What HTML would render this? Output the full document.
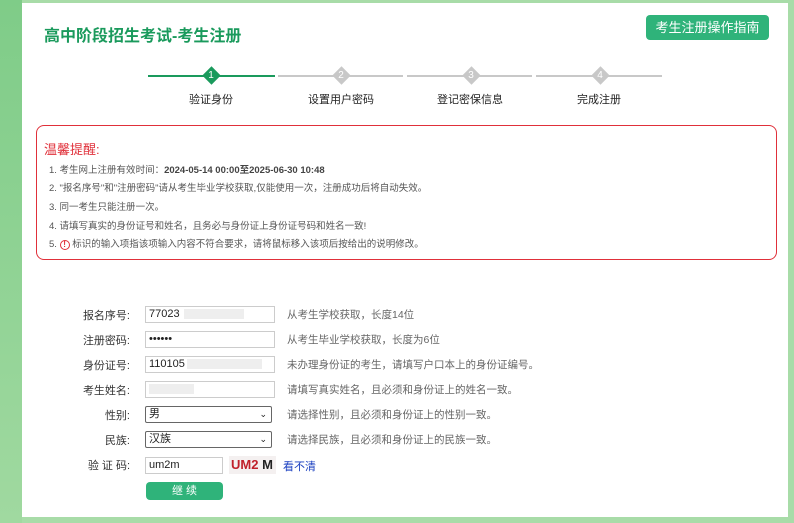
<!DOCTYPE html>
<html><head><meta charset="utf-8"><style>
*{margin:0;padding:0;box-sizing:border-box}
body{width:794px;height:523px;background:#a8dca8;position:relative;overflow:hidden;font-family:"Liberation Sans","Noto Sans CJK SC",sans-serif;color:#333}
.lbg{position:absolute;left:0;top:0;width:22px;height:523px;background:linear-gradient(#7fcc88,#a0d9a0)}
.panel{position:absolute;left:22px;top:3px;width:766px;height:514px;background:#fff}
.abs{position:absolute}
h1{position:absolute;left:44px;top:22px;font-size:16px;color:#1a9a5c;font-weight:bold}
.guide{position:absolute;left:646px;top:15px;width:123px;height:25px;background:#2fb37a;border-radius:4px;color:#fff;font-size:13px;line-height:25px;text-align:center}
.ln{position:absolute;top:75px;height:2px;background:#c8c8c8}
.dm{position:absolute;top:69px;width:13px;height:13px;transform:rotate(45deg);background:#c8c8c8}
.dn{position:absolute;top:68px;width:14px;text-align:center;color:#fff;font-size:10px;line-height:16px}
.sl{position:absolute;top:91px;font-size:11px;color:#222;width:120px;text-align:center}
.warn{position:absolute;left:36px;top:125px;width:741px;height:135px;border:1.5px solid #e0303a;border-radius:8px}
.wt{position:absolute;left:44px;top:139px;color:#e0303a;font-size:13px}
.wi{position:absolute;left:49px;font-size:9.5px;color:#555}
.lab{position:absolute;width:70px;left:60px;text-align:right;font-size:11px;color:#333}
.inp{position:absolute;left:145px;width:130px;height:17px;border:1px solid #ccc;font-size:11px;padding-left:3px;line-height:15px;color:#222}
.sel{border:1px solid #666;border-radius:2px;width:127px}
.hint{position:absolute;left:287px;font-size:10.5px;color:#666}
</style></head><body>
<div class="lbg"></div>
<div class="panel"></div>
<h1>高中阶段招生考试-考生注册</h1>
<div class="guide">考生注册操作指南</div>
<div class="ln" style="left:148px;width:127px;background:#1a9a5c"></div>
<div class="ln" style="left:278px;width:125px"></div>
<div class="ln" style="left:407px;width:125px"></div>
<div class="ln" style="left:536px;width:126px"></div>
<div class="dm" style="left:205px;background:#1a9a5c"></div><div class="dn" style="left:204px">1</div>
<div class="dm" style="left:335px"></div><div class="dn" style="left:334px">2</div>
<div class="dm" style="left:465px"></div><div class="dn" style="left:464px">3</div>
<div class="dm" style="left:594px"></div><div class="dn" style="left:593px">4</div>
<div class="sl" style="left:151px">验证身份</div>
<div class="sl" style="left:281px">设置用户密码</div>
<div class="sl" style="left:410px">登记密保信息</div>
<div class="sl" style="left:539px">完成注册</div>
<div class="warn"></div>
<div class="wt">温馨提醒:</div>
<div class="wi" style="top:162px">1. 考生网上注册有效时间：<b style="color:#444">2024-05-14 00:00至2025-06-30 10:48</b></div>
<div class="wi" style="top:180px">2. "报名序号"和"注册密码"请从考生毕业学校获取,仅能使用一次，注册成功后将自动失效。</div>
<div class="wi" style="top:199px">3. 同一考生只能注册一次。</div>
<div class="wi" style="top:218px">4. 请填写真实的身份证号和姓名，且务必与身份证上身份证号码和姓名一致!</div>
<div class="wi" style="top:236px">5. <span style="display:inline-block;width:10px;height:10px;border:1px solid #e0303a;border-radius:50%;color:#e0303a;font-size:8px;line-height:8px;text-align:center;font-weight:bold">!</span> 标识的输入项指该项输入内容不符合要求，请将鼠标移入该项后按给出的说明修改。</div>

<div class="lab" style="top:307px">报名序号:</div><div class="inp" style="top:306px">77023<span style="display:inline-block;width:60px;height:10px;background:#eee;vertical-align:middle;margin-left:4px"></span></div><div class="hint" style="top:307px">从考生学校获取，长度14位</div>
<div class="lab" style="top:332px">注册密码:</div><div class="inp" style="top:331px">••••••</div><div class="hint" style="top:332px">从考生毕业学校获取，长度为6位</div>
<div class="lab" style="top:357px">身份证号:</div><div class="inp" style="top:356px">110105<span style="display:inline-block;width:75px;height:10px;background:#eee;vertical-align:middle;margin-left:2px"></span></div><div class="hint" style="top:357px">未办理身份证的考生，请填写户口本上的身份证编号。</div>
<div class="lab" style="top:382px">考生姓名:</div><div class="inp" style="top:381px"><span style="display:inline-block;width:45px;height:10px;background:#eee;vertical-align:middle"></span></div><div class="hint" style="top:382px">请填写真实姓名，且必须和身份证上的姓名一致。</div>
<div class="lab" style="top:407px">性别:</div><div class="inp sel" style="top:406px">男<span style="position:absolute;right:4px;font-size:9px">⌄</span></div><div class="hint" style="top:407px">请选择性别，且必须和身份证上的性别一致。</div>
<div class="lab" style="top:432px">民族:</div><div class="inp sel" style="top:431px">汉族<span style="position:absolute;right:4px;font-size:9px">⌄</span></div><div class="hint" style="top:432px">请选择民族，且必须和身份证上的民族一致。</div>
<div class="lab" style="top:457px">验 证 码:</div><div class="inp" style="top:457px;width:78px">um2m</div>
<div class="abs" style="left:229px;top:456px;width:47px;height:18px;background:#f4f0f0;font-weight:bold;font-size:13px;line-height:18px;padding-left:2px"><span style="color:#c0202a">UM2</span> <span style="color:#222">M</span></div>
<div class="abs" style="left:283px;top:458px;font-size:11px;color:#1a3fc0">看不清</div>
<div class="abs" style="left:146px;top:482px;width:77px;height:18px;background:#2fb37a;border-radius:4px;color:#fff;font-size:11px;text-align:center;line-height:18px">继 续</div>
</body></html>
